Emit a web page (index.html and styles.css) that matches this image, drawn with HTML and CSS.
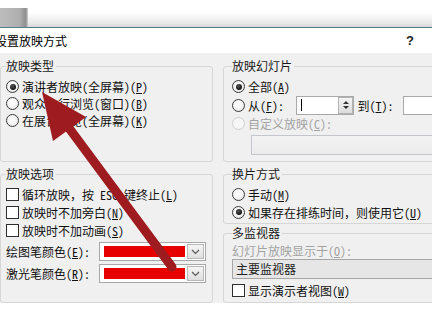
FILE: index.html
```html
<!DOCTYPE html>
<html lang="zh-CN">
<head>
<meta charset="utf-8">
<title>设置放映方式</title>
<link rel="stylesheet" href="styles.css">
</head>
<body>
<div class="screen">
  <div class="topbar"><div class="tab"></div></div>
  <div class="titlebar">
    <span class="title">设置放映方式</span>
    <span class="help">?</span>
  </div>
  <div class="dialog">
    <fieldset class="group g-type">
      <legend>放映类型</legend>
      <div class="row"><span class="radio on"></span>演讲者放映(全屏幕)(<u>P</u>)</div>
      <div class="row"><span class="radio"></span>观众自行浏览(窗口)(<u>B</u>)</div>
      <div class="row"><span class="radio"></span>在展台浏览(全屏幕)(<u>K</u>)</div>
    </fieldset>

    <fieldset class="group g-slides">
      <legend>放映幻灯片</legend>
      <div class="row"><span class="radio on"></span>全部(<u>A</u>)</div>
      <div class="row row-range">
        <span class="radio"></span><span class="lbl-from">从(<u>F</u>):</span>
        <span class="spin"><span class="caret"></span><span class="spin-btn"><span class="up"></span><span class="down"></span></span></span>
        <span class="lbl-to">到(<u>T</u>):</span>
        <span class="field"></span>
      </div>
      <div class="row disabled"><span class="radio off"></span>自定义放映(<u>C</u>):</div>
      <div class="combo combo-disabled"></div>
    </fieldset>

    <fieldset class="group g-options">
      <legend>放映选项</legend>
      <div class="row crow"><span class="check"></span>循环放映，按 ESC 键终止(<u>L</u>)</div>
      <div class="row crow"><span class="check"></span>放映时不加旁白(<u>N</u>)</div>
      <div class="row crow"><span class="check"></span>放映时不加动画(<u>S</u>)</div>
      <div class="color-row">
        <span class="color-lbl">绘图笔颜色(<u>E</u>):</span>
        <span class="color-combo"><span class="swatch"></span><span class="drop"><svg width="9" height="6" viewBox="0 0 9 6"><path d="M1 1 L4.5 4.5 L8 1" fill="none" stroke="#5a5a5a" stroke-width="1.2"/></svg></span></span>
      </div>
      <div class="color-row">
        <span class="color-lbl">激光笔颜色(<u>R</u>):</span>
        <span class="color-combo"><span class="swatch"></span><span class="drop"><svg width="9" height="6" viewBox="0 0 9 6"><path d="M1 1 L4.5 4.5 L8 1" fill="none" stroke="#5a5a5a" stroke-width="1.2"/></svg></span></span>
      </div>
    </fieldset>

    <div class="stack">
      <fieldset class="group g-advance">
        <legend>换片方式</legend>
        <div class="row crow"><span class="radio"></span>手动(<u>M</u>)</div>
        <div class="row crow"><span class="radio on"></span>如果存在排练时间，则使用它(<u>U</u>)</div>
      </fieldset>
      <fieldset class="group g-monitor">
        <legend>多监视器</legend>
        <div class="row disabled mrow">幻灯片放映显示于(<u>O</u>):</div>
        <div class="combo combo-monitor">主要监视器</div>
        <div class="row crow mcheck"><span class="check"></span>显示演示者视图(<u>W</u>)</div>
      </fieldset>
    </div>
  </div>

  <svg class="arrow" width="439" height="316" viewBox="0 0 439 316">
    <line x1="172" y1="267" x2="66" y2="124" stroke="#9e1c1f" stroke-width="9" stroke-linecap="round"/>
    <polygon points="42,92 86,117 53,141" fill="#9e1c1f"/>
  </svg>
</div>
</body>
</html>
```

FILE: styles.css
```css
html, body {
  margin: 0;
  padding: 0;
  background: #ffffff;
}

body {
  font-family: "Noto Sans Mono CJK SC", "Noto Sans CJK SC", sans-serif;
  font-size: 12px;
  color: #111;
}

.screen {
  position: relative;
  width: 432px;
  height: 316px;
  overflow: hidden;
}

.topbar {
  height: 27px;
  background: linear-gradient(#ffffff 0%, #ffffff 45%, #e9e9e9 85%, #d6d6d6 100%);
  border-bottom: 1px solid #567e8a;
  display: flex;
  align-items: flex-end;
}

.tab {
  width: 28px;
  height: 19px;
  background: linear-gradient(to right, #bdbdbd 0%, #aeaeae 70%, #8e8e8e 92%, #d0d0d0 100%);
}

.titlebar {
  height: 25px;
  background: #ffffff;
  display: flex;
  align-items: center;
  justify-content: space-between;
}

.title {
  margin-left: -5px;
  font-size: 12px;
  color: #000;
}

.help {
  margin-right: 18px;
  font-family: "Liberation Sans", sans-serif;
  font-weight: bold;
  font-size: 13px;
  color: #222;
}

.dialog {
  height: 250px;
  box-sizing: border-box;
  background: #f0f0f0;
  padding-top: 6px;
  display: grid;
  grid-template-columns: 213px 240px;
  grid-template-rows: auto auto;
  column-gap: 10px;
  row-gap: 5px;
  align-items: stretch;
}

.group {
  margin: 0;
  border: 1px solid #d6d6d6;
  border-radius: 3px;
  min-width: 0;
}

.group legend {
  padding: 0 2px 0 0;
  line-height: 14px;
  height: 14px;
  font-size: 12px;
  color: #1a1a1a;
}

.g-type, .g-options {
  padding: 0 0 0 5px;
}

.g-slides, .g-advance, .g-monitor {
  padding: 0 0 0 8px;
}

.g-type, .g-slides {
  padding-top: 5px;
}

.row {
  display: flex;
  align-items: center;
  height: 17px;
  white-space: nowrap;
}

.crow {
  height: 18px;
}

.disabled {
  color: #a3a3a3;
}

u {
  text-decoration: underline;
  text-underline-offset: 1px;
}

.radio {
  flex: none;
  width: 13px;
  height: 13px;
  box-sizing: border-box;
  border-radius: 50%;
  border: 1px solid #3a3a3a;
  background: radial-gradient(circle at 45% 40%, #ffffff 0%, #f2f2f2 55%, #d9d9d9 100%);
  margin-right: 3px;
  position: relative;
}

.radio.on::after {
  content: "";
  position: absolute;
  left: 2.5px;
  top: 2.5px;
  width: 6px;
  height: 6px;
  border-radius: 50%;
  background: radial-gradient(circle at 40% 35%, #555 0%, #111 70%);
}

.radio.off {
  border-color: #cfcfcf;
  background: #f6f6f6;
}

.check {
  flex: none;
  width: 13px;
  height: 13px;
  box-sizing: border-box;
  border: 1px solid #2e2e2e;
  background: #ffffff;
  margin-right: 3px;
}

.row-range {
  height: 20px;
}

.lbl-from {
  width: 49px;
}

.spin {
  width: 59px;
  height: 19px;
  box-sizing: border-box;
  border: 1px solid #a9a9a9;
  background: #ffffff;
  display: flex;
  align-items: center;
  justify-content: space-between;
}

.caret {
  width: 1px;
  height: 12px;
  background: #000;
  margin-left: 4px;
}

.spin-btn {
  width: 15px;
  height: 17px;
  box-sizing: border-box;
  border: 1px solid #b4b4b4;
  background: linear-gradient(#f4f4f4, #dcdcdc);
  display: flex;
  flex-direction: column;
  align-items: center;
  justify-content: center;
  gap: 2px;
}

.spin-btn .up {
  width: 0;
  height: 0;
  border-left: 3px solid transparent;
  border-right: 3px solid transparent;
  border-bottom: 3px solid #333;
}

.spin-btn .down {
  width: 0;
  height: 0;
  border-left: 3px solid transparent;
  border-right: 3px solid transparent;
  border-top: 3px solid #333;
}

.lbl-to {
  margin-left: 3px;
  width: 46px;
}

.field {
  width: 60px;
  height: 19px;
  box-sizing: border-box;
  border: 1px solid #a9a9a9;
  background: #ffffff;
}

.combo {
  height: 20px;
  box-sizing: border-box;
}

.combo-disabled {
  margin: 3px 0 4px 19px;
  border: 1px solid #c3c7cc;
  background: linear-gradient(#f3f3f3, #ebebeb);
}

.g-options {
  padding-top: 4px;
  padding-bottom: 12px;
}

.color-row {
  display: flex;
  align-items: center;
  height: 19px;
  margin-top: 3px;
}

.color-row:first-of-type {
  margin-top: 8px;
}

.color-lbl {
  width: 93px;
  white-space: nowrap;
}

.color-combo {
  width: 107px;
  height: 19px;
  box-sizing: border-box;
  border: 1px solid #a8a8a8;
  background: #ffffff;
  display: flex;
  align-items: center;
  padding: 0 1px 0 4px;
}

.swatch {
  width: 81px;
  height: 11px;
  background: #e60000;
}

.drop {
  margin-left: auto;
  width: 17px;
  height: 15px;
  box-sizing: border-box;
  border: 1px solid #b8b8b8;
  background: linear-gradient(#f5f5f5, #dedede);
  display: flex;
  align-items: center;
  justify-content: center;
}

.stack {
  display: flex;
  flex-direction: column;
  gap: 2px;
}

.g-advance {
  padding-top: 4px;
  padding-bottom: 2px;
}

.g-monitor {
  padding-top: 2px;
  padding-bottom: 1px;
  flex: 1;
}

.mrow {
  height: 16px;
}

.combo-monitor {
  margin-top: 1px;
  border: 1px solid #a6a6a6;
  background: #e6e6e6;
  padding-left: 3px;
  line-height: 18px;
  color: #222;
}

.mcheck {
  margin-top: 2px;
}

.arrow {
  position: absolute;
  left: 0;
  top: 0;
  pointer-events: none;
}
```
